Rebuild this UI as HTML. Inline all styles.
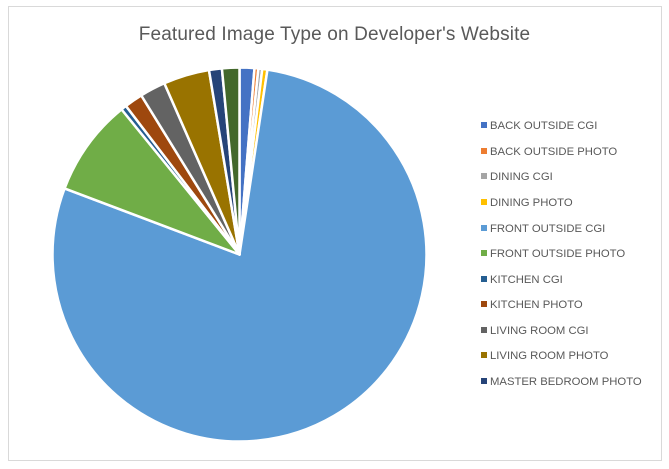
<!DOCTYPE html>
<html><head><meta charset="utf-8"><style>
body{margin:0;width:669px;height:469px;background:#fff;overflow:hidden;font-family:"Liberation Sans",sans-serif}
#frame{position:absolute;left:8px;top:6px;width:652px;height:453px;border:1px solid #d9d9d9}
#title{position:absolute;left:0;width:669px;top:24px;text-align:center;font-size:19px;color:#595959;letter-spacing:0.15px}
.lg{position:absolute;left:481px;font-size:11.3px;color:#595959;line-height:14px}
.lg i{display:inline-block;width:6px;height:6px;margin-right:3px;vertical-align:1px}
svg{position:absolute;left:0;top:0}
</style></head><body>
<div id="frame"></div>
<div id="title">Featured Image Type on Developer's Website</div>
<svg id="s" width="669" height="469"></svg>
<div class="lg" style="top:119px"><i style="background:#4472c4"></i>BACK OUTSIDE CGI</div>
<div class="lg" style="top:145px"><i style="background:#ed7d31"></i>BACK OUTSIDE PHOTO</div>
<div class="lg" style="top:170px"><i style="background:#a5a5a5"></i>DINING CGI</div>
<div class="lg" style="top:196px"><i style="background:#ffc000"></i>DINING PHOTO</div>
<div class="lg" style="top:222px"><i style="background:#5b9bd5"></i>FRONT OUTSIDE CGI</div>
<div class="lg" style="top:247px"><i style="background:#70ad47"></i>FRONT OUTSIDE PHOTO</div>
<div class="lg" style="top:273px"><i style="background:#255e91"></i>KITCHEN CGI</div>
<div class="lg" style="top:298px"><i style="background:#9e480e"></i>KITCHEN PHOTO</div>
<div class="lg" style="top:324px"><i style="background:#636363"></i>LIVING ROOM CGI</div>
<div class="lg" style="top:349px"><i style="background:#997300"></i>LIVING ROOM PHOTO</div>
<div class="lg" style="top:375px"><i style="background:#264478"></i>MASTER BEDROOM PHOTO</div>
<script>
var cx=239.5,cy=254.5,r=187;
var sl=[[0,4.6,"#4472c4"],[4.6,5.8,"#ed7d31"],[5.8,7.0,"#a5a5a5"],[7.0,8.6,"#ffc000"],[8.6,290.7,"#5b9bd5"],[290.7,320.9,"#70ad47"],[320.9,322.6,"#255e91"],[322.6,328.3,"#9e480e"],[328.3,336.3,"#636363"],[336.3,350.6,"#997300"],[350.6,354.6,"#264478"],[354.6,360,"#43682b"]];
function p(a){a=a*Math.PI/180;return (cx+r*Math.sin(a)).toFixed(2)+","+(cy-r*Math.cos(a)).toFixed(2);}
var h="";
sl.forEach(function(s){var big=(s[1]-s[0])>180?1:0;
h+='<path d="M'+cx+','+cy+' L'+p(s[0])+' A'+r+','+r+' 0 '+big+' 1 '+p(s[1])+' Z" fill="'+s[2]+'" stroke="#fff" stroke-width="2.5" stroke-linejoin="round"/>';});
document.getElementById("s").innerHTML=h;
</script>
</body></html>
